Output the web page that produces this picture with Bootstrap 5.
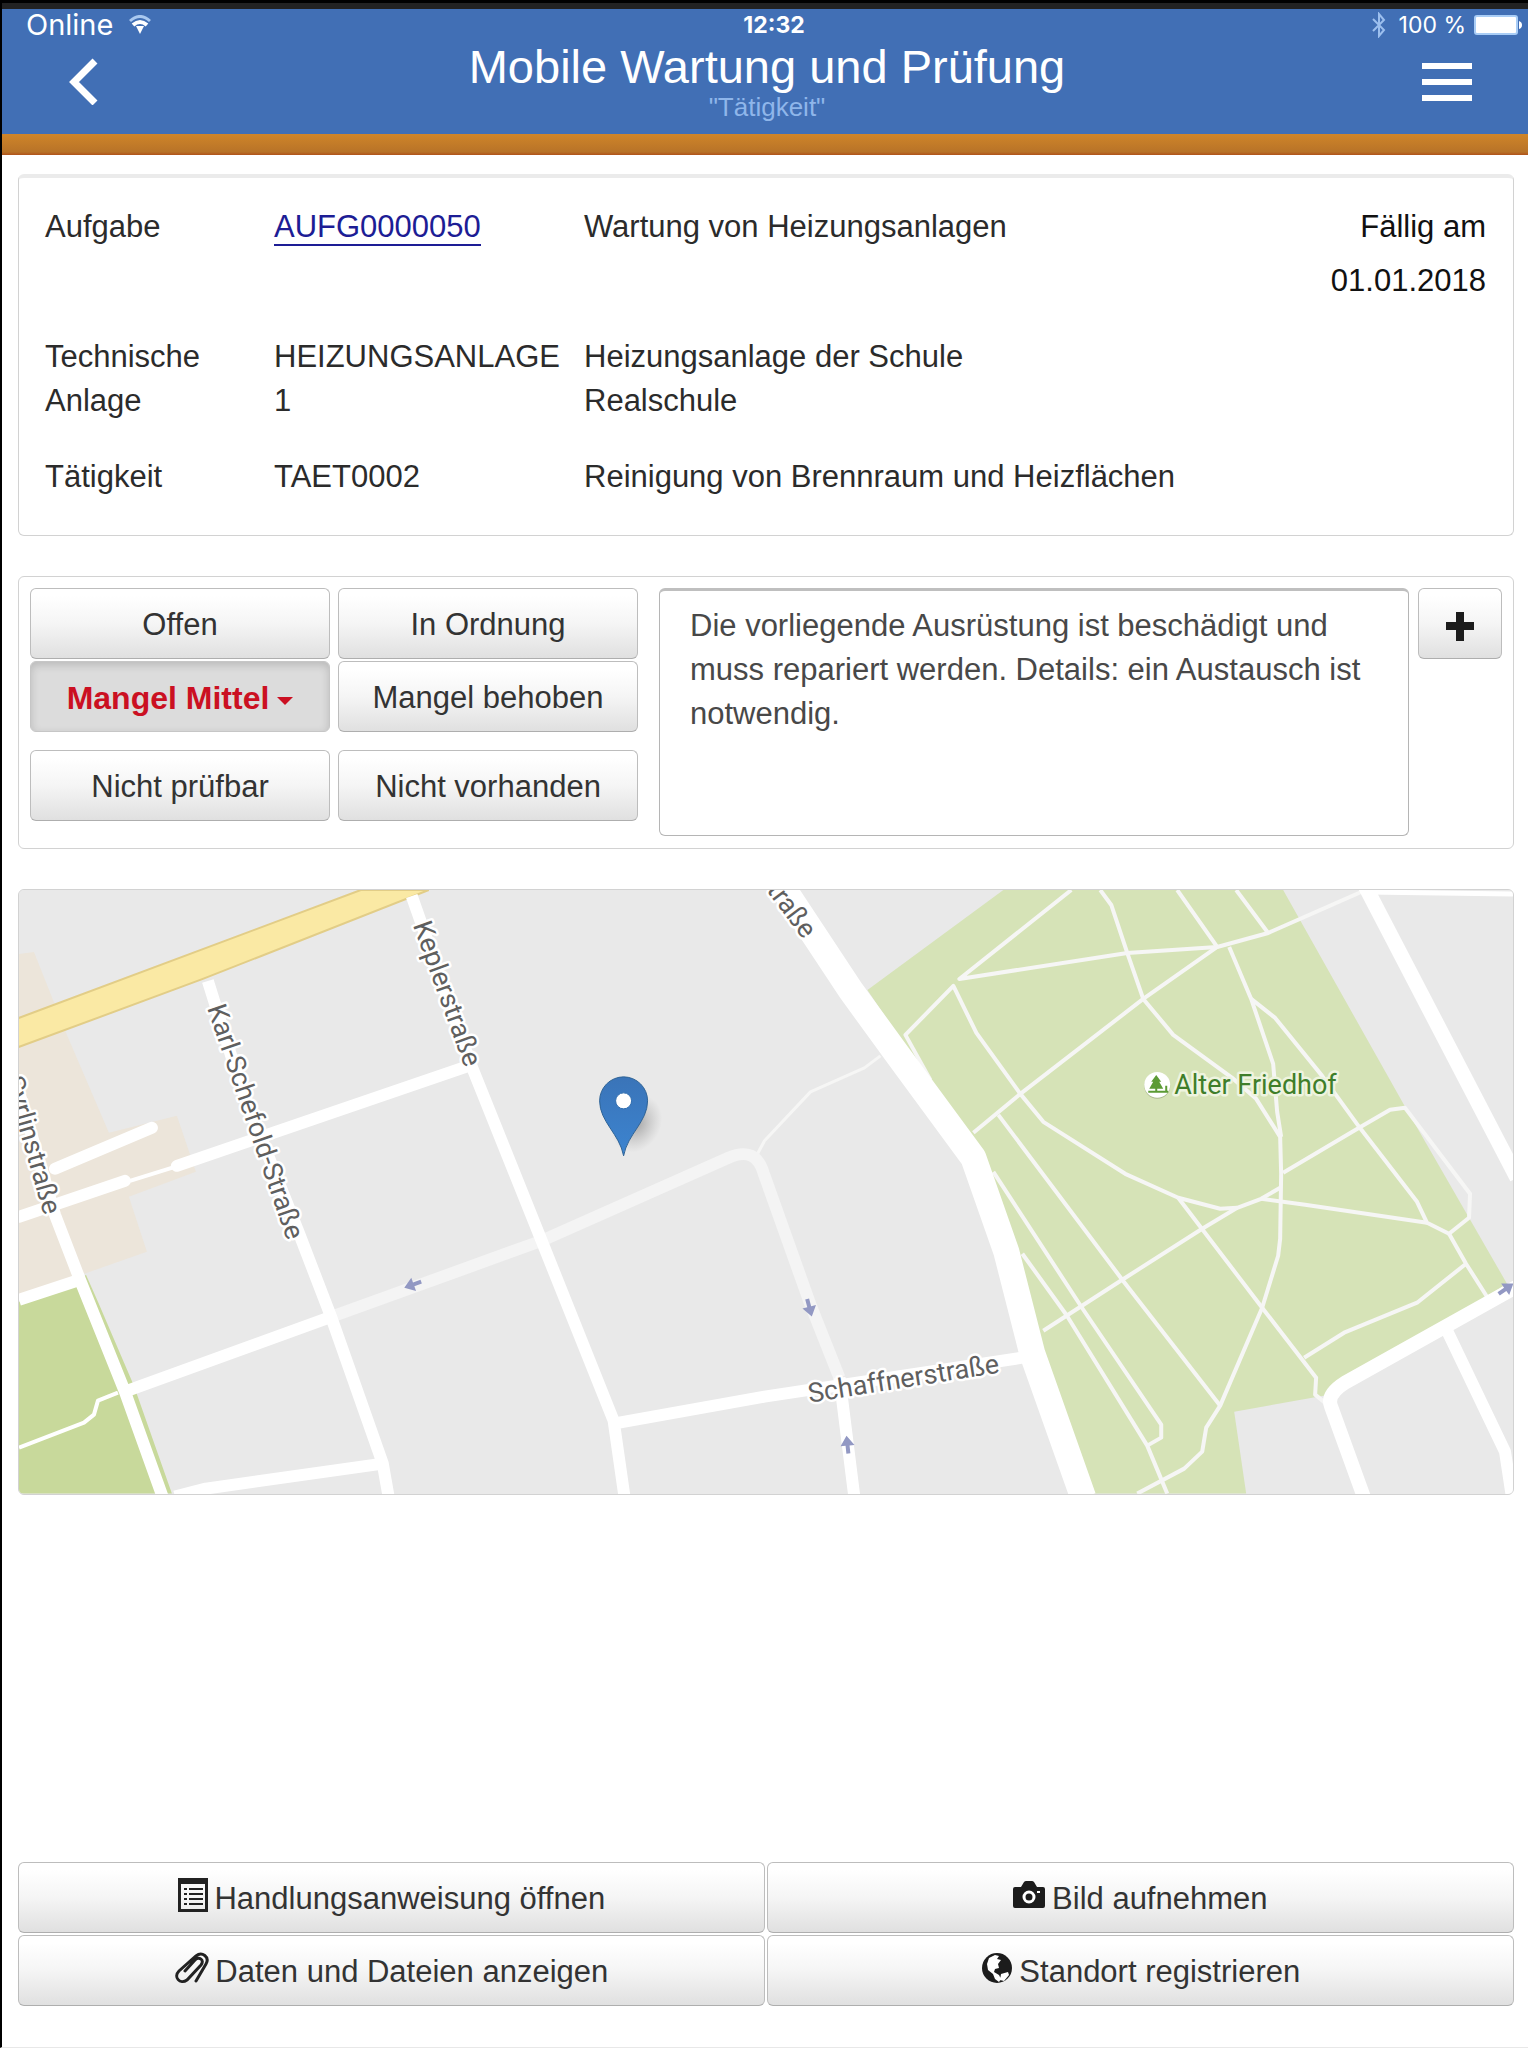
<!DOCTYPE html>
<html lang="de">
<head>
<meta charset="utf-8">
<meta name="viewport" content="width=device-width, initial-scale=1">
<title>Mobile Wartung und Prüfung</title>
<link href="https://cdn.jsdelivr.net/npm/bootstrap@5.3.0/dist/css/bootstrap.min.css" rel="stylesheet">
<style>
  body { font-family: "Liberation Sans", Arial, sans-serif; font-size: 31px; line-height: 44px; color: #2b2b2b; background: #fff; }
  .app-shell { border-left: 2px solid #000; border-top: 3px solid #000; border-bottom: 1px solid #e8e8e8; }
  .app-header { background: #416fb5; border-top: 6px solid #222; color: #fff; padding-bottom: 13px; }
  .status-bar { font-family: Inter, "Liberation Sans", sans-serif; font-size: 23px; line-height: 32px; padding: 0 6px 0 24px; }
  .status-bar .online { font-size: 29px; }
  .title-bar { padding: 0 56px 0 60px; }
  .title-bar h1 { font-size: 47px; line-height: 52px; font-weight: 400; }
  .title-bar p { font-size: 26px; line-height: 28px; color: #8fb6ea; }
  .icon-btn { background: none; border: 0; padding: 0; color: #fff; width: 50px; }
  .accent-bar { height: 21px; background: linear-gradient(#cf8529, #b87328 85%, #b0521a); }
  .app-main { padding: 19px 14px 41px 16px; }
  .panel { border: 1px solid #d2d2d2; border-radius: 6px; }
  .info-panel { border-top: 4px solid #ebebeb; padding: 27px 27px 36px 26px; }
  .info-grid { display: grid; grid-template-columns: 229px 310px 1fr auto; row-gap: 32px; }
  .info-grid a { color: #1d1d95; text-decoration: none; border-bottom: 2px solid #1d1d95; }
  .due { color: #111; gap: 10px; }
  .status-panel { padding: 11px 11px 12px; margin-top: 40px; gap: 9px; }
  .status-grid { flex: 0 0 608px; gap: 2px; }
  .status-pair { display: grid; grid-template-columns: 1fr 1fr; column-gap: 8px; }
  .btn-soft { --bs-btn-color: #333; --bs-btn-border-color: #bdbdbd; --bs-btn-hover-border-color: #999; --bs-btn-hover-color: #111;
    --bs-btn-font-size: 31px; --bs-btn-line-height: 44px; --bs-btn-border-radius: 6px;
    padding: 14px 8px 11px; background-image: linear-gradient(#fff 10%, #f5f5f5 50%, #e0e0e0); border-bottom-color: #aeaeae; }
  .btn-soft.chosen { background: #dcdcdc; color: #cb1022; font-size: 32px; font-weight: 700; border-color: #c6c6c6; box-shadow: inset 0 3px 8px rgba(0,0,0,.16); }
  .chosen::after { border-top-color: #cb1022; border-width: 8px 8px 0; margin-left: 8px; vertical-align: 4px; }
  .note-box { font-size: 31px; line-height: 44px; color: #484848; padding: 13px 30px; margin-left: 12px; height: 248px; border: 1px solid #b5b5b5; border-top: 3px solid #bfbfbf; border-radius: 6px; resize: none; }
  .plus-btn { width: 84px; }
  .map-panel { margin-top: 40px; overflow: hidden; background: #e9e9e9; }
  .map-panel svg { width: 100%; height: auto; }
  .map-label { font-family: Roboto, sans-serif; font-size: 27px; fill: #5f5f5f; stroke: #fff; stroke-width: 5px; stroke-linejoin: round; paint-order: stroke; }
  .park-label { fill: #3f7e2a; stroke: #eef4df; }
  .action-grid { display: grid; grid-template-columns: 1fr 1fr; gap: 2px; padding-top: 39px; }
  .action-grid svg { margin: -12px -2px 0 0; }
</style>
</head>
<body>
<div class="app-shell min-vh-100 d-flex flex-column">
  <header class="app-header">
    <div class="status-bar d-flex align-items-center">
      <div class="flex-fill w-100 d-flex align-items-center gap-3">
        <span class="online">Online</span>
        <svg width="22" height="20" viewBox="0 0 22 20" fill="none" stroke="#fff" aria-hidden="true"><path d="M1 6Q11-3 21 6" stroke="#a9c8f0" stroke-width="3"/><path d="M4 10Q11 4 18 10" stroke-width="4"/><path d="M7 11h8l-4 8z" fill="#fff" stroke="none"/></svg>
      </div>
      <div class="flex-shrink-0 fw-bold">12:32</div>
      <div class="flex-fill w-100 d-flex align-items-center justify-content-end">
        <svg class="me-2" width="16" height="26" viewBox="0 0 16 26" fill="none" stroke="#9cbfee" stroke-width="2" aria-hidden="true"><path d="M2 7l11 11-5 6V2l5 6L2 19"/></svg>
        <span class="mx-1 pe-1">100 %</span>
        <svg width="48" height="20" viewBox="0 0 48 20" aria-hidden="true"><rect width="44" height="20" rx="3" fill="#a9cdf6"/><rect x="2" y="2" width="40" height="16" rx="1" fill="#fff"/><path d="M45 6q3 1 3 4t-3 4z" fill="#fff"/></svg>
      </div>
    </div>
    <div class="title-bar d-flex justify-content-between align-items-center">
      <button class="icon-btn text-start" type="button" aria-label="Zurück"><svg width="36" height="48" viewBox="0 0 36 48" fill="none" stroke="#fff" stroke-width="7"><path d="M33 4L12 25l21 21"/></svg></button>
      <div class="text-center"><h1 class="m-0">Mobile Wartung und Prüfung</h1><p class="m-0">"Tätigkeit"</p></div>
      <button class="icon-btn text-end" type="button" aria-label="Menü"><svg width="50" height="40" viewBox="0 0 50 40" fill="#fff"><path d="M0 0h50v6H0zM0 16h50v6H0zM0 32h50v6H0z"/></svg></button>
    </div>
  </header>
  <div class="accent-bar"></div>

  <main class="app-main flex-grow-1 d-flex flex-column">
    <section class="panel info-panel">
      <div class="info-grid">
        <div>Aufgabe</div><div><a href="#aufgabe">AUFG0000050</a></div><div>Wartung von Heizungsanlagen</div>
        <div class="due d-flex flex-column text-end"><span>Fällig am</span><span>01.01.2018</span></div>
        <div>Technische<br>Anlage</div><div>HEIZUNGSANLAGE<br>1</div><div>Heizungsanlage der Schule<br>Realschule</div><div></div>
        <div>Tätigkeit</div><div>TAET0002</div><div>Reinigung von Brennraum und Heizflächen</div><div></div>
      </div>
    </section>

    <section class="panel status-panel d-flex align-items-start">
      <div class="status-grid d-flex flex-column">
        <div class="status-pair"><button class="btn btn-soft" type="button">Offen</button><button class="btn btn-soft" type="button">In Ordnung</button></div>
        <div class="status-pair mb-3"><button class="btn btn-soft chosen dropdown-toggle" type="button">Mangel Mittel</button><button class="btn btn-soft" type="button">Mangel behoben</button></div>
        <div class="status-pair"><button class="btn btn-soft" type="button">Nicht prüfbar</button><button class="btn btn-soft" type="button">Nicht vorhanden</button></div>
      </div>
      <textarea class="note-box flex-grow-1" aria-label="Bemerkung">Die vorliegende Ausrüstung ist beschädigt und muss repariert werden. Details: ein Austausch ist notwendig.</textarea>
      <button class="btn btn-soft plus-btn flex-shrink-0" type="button" aria-label="Hinzufügen"><svg class="align-text-bottom" width="30" height="30" viewBox="0 0 30 30" fill="#1c1c1c"><path d="M11 0h8v10h10v8H19v11h-8V18H1v-8h10z"/></svg></button>
    </section>

    <section class="panel map-panel">
      <svg class="d-block" viewBox="18 18 1495 604" role="img" aria-label="Karte">
        <defs>
          <linearGradient id="pinFill" x1="0" y1="0" x2="0" y2="1"><stop offset="0" stop-color="#3a74b8"/><stop offset="1" stop-color="#3c84d0"/></linearGradient>
          <radialGradient id="pinShade"><stop offset="0" stop-color="#777" stop-opacity=".6"/><stop offset="1" stop-color="#999" stop-opacity="0"/></radialGradient>
        </defs>
        <rect x="18" y="18" width="1495" height="604" fill="#e9e9e9"/>
        <path fill="#ece5da" d="M18 82L33 80 66 163 108 261 176 244 195 300 128 325 146 380 18 425z"/>
        <path fill="#c8d99b" d="M18 430L77 410 85 403 97 430 133 514 171 622H18z"/>
        <path fill="#d6e3b7" d="M1003 18H1283L1405 235 1507 412 1329 523 1234 540 1246 622H1085L1020 420 975 280 867 118z"/>
        <path fill="#fae9a4" stroke="#e2cd87" stroke-width="2" d="M10 149L360 18H428L202 107 10 178z"/>
        <g fill="none" stroke="#f6f6f5" stroke-width="4" stroke-linejoin="round">
          <path d="M1071 18L959 107 1127 81 1217 75 1268 61 1361 20"/>
          <path d="M1100 18L1111 33 1127 81 1143 127 1173 163 1232 206 1256 227 1280 265 1281 302 1280 367 1278 384 1262 436 1220 534 1206 556 1202 580 1184 597 1137 622"/>
          <path d="M1177 18L1217 75 1143 127 1020 222 973 261M1236 18L1268 61"/>
          <path d="M1229 75L1251 127 1273 192 1277 240 1281 265"/>
          <path d="M1251 127L1275 146 1322 204 1359 255 1417 330 1427 351 1449 362 1469 346 1470 322 1405 236 1390 238 1359 256 1283 301"/>
          <path d="M1449 362L1466 392 1487 425M1466 392L1417 431 1344 461 1304 486M1427 351L1305 333 1261 327"/>
          <path d="M930 208L905 163 953 114 976 161 1020 222 1043 250 1125 302 1178 326 1220 337 1237 336 1261 327 1280 316"/>
          <path d="M1178 326L1262 436 1316 506 1315 523 1326 532M1237 336L1202 357 1122 408 1043 459M998 243L1122 408 1220 534"/>
          <path d="M993 300L1081 435 1161 553V566L1147 574M1022 382L1066 443 1147 574 1167 622"/>
          <path d="M757 282L764 269 810 220 864 196 880 184" stroke-width="3"/>
        </g>
        <path fill="none" stroke="#f4f4f4" stroke-width="12" d="M331 445L541 369 728 286Q755 274 763 301L810 433 839 506"/>
        <g fill="none" stroke="#fff" stroke-width="12" stroke-linejoin="round">
          <path d="M18 220L54 343 79 408 124 520 162 626"/>
          <path d="M207 109L240 215 298 361 331 447 382 592 388 626"/>
          <path d="M411 24L470 192 541 369 613 549 624 626"/>
          <path d="M176 294L468 194M54 297L151 256" stroke-linecap="round"/>
          <path d="M18 345L124 309" stroke-linecap="round"/>
          <path d="M129 309L174 295" stroke-width="4"/>
          <path d="M18 428L79 408M124 520L331 445M174 625L205 617 382 592"/>
          <path d="M117 521L97 529 93 543 83 551 18 576" stroke-width="4"/>
          <path d="M613 552L764 525 1022 486M839 506L854 626"/>
          <path d="M780 12L850 118 898 184 973 286 1006 380 1032 482 1083 626" stroke-width="26"/>
          <path d="M1364 12L1517 306" stroke-width="15"/>
          <path d="M1367 20L1513 22" stroke-width="5"/>
          <path d="M1520 413L1345 511Q1326 523 1331 535L1364 626" stroke-width="14"/>
          <path d="M1447 459L1505 580 1512 626"/>
        </g>
        <g fill="#9298c3">
          <path d="M-9 0L1-7V-2H9V2H1V7z" transform="translate(412 413) rotate(-20)"/>
          <path d="M-9 0L1-7V-2H9V2H1V7z" transform="translate(809 436) rotate(-105)"/>
          <path d="M-9 0L1-7V-2H9V2H1V7z" transform="translate(847 573) rotate(84)"/>
          <path d="M-9 0L1-7V-2H9V2H1V7z" transform="translate(1506 417) rotate(145)"/>
        </g>
        <text class="map-label" transform="translate(412 53) rotate(70)">Keplerstraße</text>
        <text class="map-label" transform="translate(206 136) rotate(71)">Karl-Schefold-Straße</text>
        <text class="map-label" text-anchor="end" transform="translate(43 344) rotate(74)">Syrlinstraße</text>
        <text class="map-label" text-anchor="end" transform="translate(803 68) rotate(53)">traße</text>
        <text class="map-label" transform="translate(809 531) rotate(-9)">Schaffnerstraße</text>
        <circle cx="1157" cy="214" r="13" fill="#aab98e"/><circle cx="1157" cy="213" r="13" fill="#fff"/>
        <path fill="#5c9b35" d="M1156 203l5 7h-2l4 7h-6v2h8v-5h2v5h1v2h-20v-2h7v-2h-6l4-7h-2z"/>
        <text class="map-label park-label" x="1174" y="222">Alter Friedhof</text>
        <ellipse cx="636" cy="252" rx="30" ry="24" fill="url(#pinShade)" transform="rotate(-60 636 252)"/>
        <path fill="url(#pinFill)" stroke="#2d6296" stroke-width="1" d="M623 284C619 262 599 250 599 229A24 24 0 0 1 647 229C647 250 627 262 623 284z"/>
        <circle cx="623" cy="229" r="8" fill="#fff" stroke="#2f6cae"/>
      </svg>
    </section>

    <nav class="action-grid mt-auto" aria-label="Aktionen">
      <button class="btn btn-soft" type="button"><svg width="30" height="34" viewBox="0 0 30 34" aria-hidden="true"><path fill="#222" fill-rule="evenodd" d="M0 0h30v34H0zM3 6v25h24V6z"/><path stroke="#222" stroke-width="2" d="M6 11h3M11 11h14M6 16h3M11 16h14M6 21h3M11 21h14M6 26h3M11 26h14"/></svg> Handlungsanweisung öffnen</button>
      <button class="btn btn-soft" type="button"><svg width="32" height="28" viewBox="0 0 32 28" aria-hidden="true"><path fill="#1c1c1c" d="M2 6h6l3-5q1-1 2-1h6q1 0 2 1l3 5h6q2 0 2 2v17q0 2-2 2H2q-2 0-2-2V8q0-2 2-2z"/><circle cx="16" cy="16" r="5" fill="none" stroke="#fff" stroke-width="3"/><path fill="#fff" d="M24 10h3v2h-3z"/></svg> Bild aufnehmen</button>
      <button class="btn btn-soft" type="button"><svg width="34" height="32" viewBox="0 0 34 32" fill="none" stroke="#222" stroke-width="3" stroke-linecap="round" aria-hidden="true"><path d="M21 29L31 12C35 5 27-1 21 4L4 19C-2 25 5 33 12 28L26 13C30 8 24 4 20 8L10 19"/></svg> Daten und Dateien anzeigen</button>
      <button class="btn btn-soft" type="button"><svg width="32" height="32" viewBox="0 0 32 32" aria-hidden="true"><circle cx="16" cy="16" r="15" fill="#1c1c1c"/><path fill="#fff" d="M8 6l6-3 4 1-2 3 4 1-3 4 1 4-4 1-1 3 5 3 2 4-2 3-4-3-2-5-5-4-1-6zM20 22l7-2 1 3-5 6-4-1z"/></svg> Standort registrieren</button>
    </nav>
  </main>
</div>
<script src="https://cdn.jsdelivr.net/npm/bootstrap@5.3.0/dist/js/bootstrap.bundle.min.js"></script>
</body>
</html>
